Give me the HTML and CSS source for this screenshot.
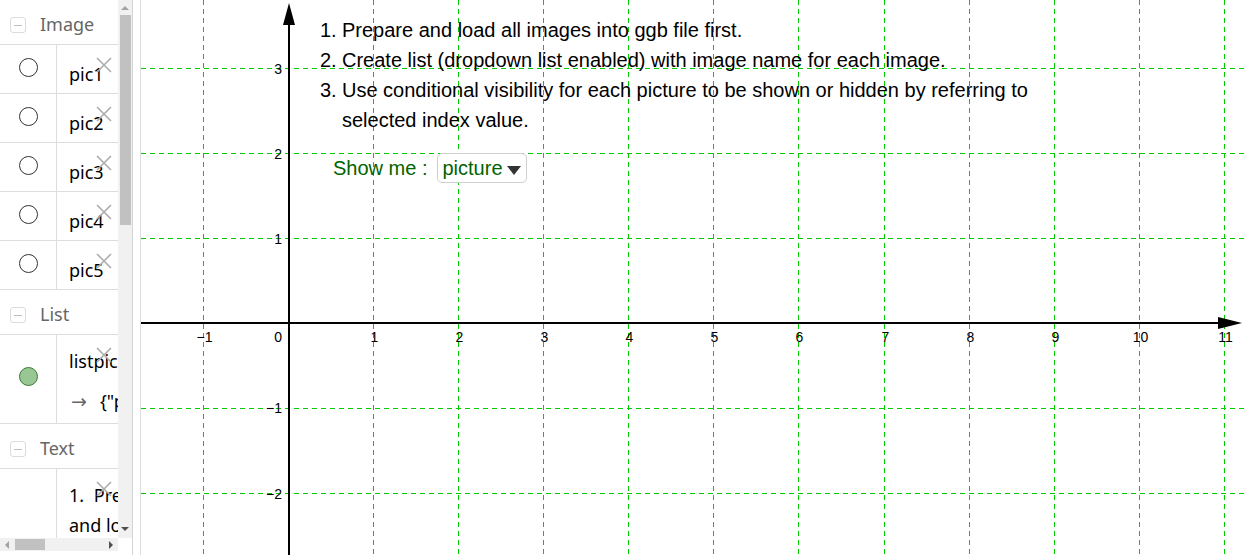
FILE: index.html
```html
<!DOCTYPE html>
<html>
<head>
<meta charset="utf-8">
<link rel="stylesheet" href="styles.css">
</head>
<body>
<div class="app">
  <aside class="algebra">
    <div class="av-list">
      <div class="av-header"><span class="collapse"><span class="minus"></span></span><span class="av-title">Image</span></div>
      <div class="av-item">
        <div class="marble-cell"><span class="marble"></span></div>
        <div class="av-content pic"><span>pic1</span><svg class="del" viewBox="0 0 16 16"><path d="M1 1L15 15M15 1L1 15"/></svg></div>
      </div>
      <div class="av-item">
        <div class="marble-cell"><span class="marble"></span></div>
        <div class="av-content pic"><span>pic2</span><svg class="del" viewBox="0 0 16 16"><path d="M1 1L15 15M15 1L1 15"/></svg></div>
      </div>
      <div class="av-item">
        <div class="marble-cell"><span class="marble"></span></div>
        <div class="av-content pic"><span>pic3</span><svg class="del" viewBox="0 0 16 16"><path d="M1 1L15 15M15 1L1 15"/></svg></div>
      </div>
      <div class="av-item">
        <div class="marble-cell"><span class="marble"></span></div>
        <div class="av-content pic"><span>pic4</span><svg class="del" viewBox="0 0 16 16"><path d="M1 1L15 15M15 1L1 15"/></svg></div>
      </div>
      <div class="av-item">
        <div class="marble-cell"><span class="marble"></span></div>
        <div class="av-content pic"><span>pic5</span><svg class="del" viewBox="0 0 16 16"><path d="M1 1L15 15M15 1L1 15"/></svg></div>
      </div>
      <div class="av-header"><span class="collapse"><span class="minus"></span></span><span class="av-title">List</span></div>
      <div class="av-item tall">
        <div class="marble-cell list-cell"><span class="marble filled"></span></div>
        <div class="av-content listc">
          <div class="line">listpic1 = {"picture", "pic1"}</div>
          <div class="line second"><span class="arrow">→</span>{"picture", "pic1"}</div>
          <svg class="del" viewBox="0 0 16 16"><path d="M1 1L15 15M15 1L1 15"/></svg>
        </div>
      </div>
      <div class="av-header"><span class="collapse"><span class="minus"></span></span><span class="av-title">Text</span></div>
      <div class="av-item textrow">
        <div class="marble-cell"></div>
        <div class="av-content textc">
          <div class="tline">1. <span class="tword">Prepare</span></div>
          <div class="tline">and load all images</div>
          <svg class="del" viewBox="0 0 16 16"><path d="M1 1L15 15M15 1L1 15"/></svg>
        </div>
      </div>
    </div>
    <div class="vscroll">
      <div class="arrow-box up"><span class="tri-up"></span></div>
      <div class="vthumb"></div>
      <div class="spacer"></div>
      <div class="arrow-box down"><span class="tri-down"></span></div>
    </div>
    <div class="hscroll">
      <div class="harrow left"><span class="tri-left"></span></div>
      <div class="hthumb"></div>
      <div class="spacer"></div>
      <div class="harrow right"><span class="tri-right"></span></div>
    </div>
    <div class="corner"></div>
  </aside>
  <div class="splitter"></div>
  <main class="graphics">
    <svg class="canvas" width="1105" height="555" viewBox="141 0 1105 555">
      <g class="grid">
        <line x1="203.5" y1="0" x2="203.5" y2="555"/>
        <line x1="373.5" y1="0" x2="373.5" y2="555"/>
        <line x1="458.5" y1="0" x2="458.5" y2="555"/>
        <line x1="543.5" y1="0" x2="543.5" y2="555"/>
        <line x1="628.5" y1="0" x2="628.5" y2="555"/>
        <line x1="713.5" y1="0" x2="713.5" y2="555"/>
        <line x1="798.5" y1="0" x2="798.5" y2="555"/>
        <line x1="884.5" y1="0" x2="884.5" y2="555"/>
        <line x1="969.5" y1="0" x2="969.5" y2="555"/>
        <line x1="1054.5" y1="0" x2="1054.5" y2="555"/>
        <line x1="1139.5" y1="0" x2="1139.5" y2="555"/>
        <line x1="1224.5" y1="0" x2="1224.5" y2="555"/>
        <line x1="141" y1="68.5" x2="1246" y2="68.5"/>
        <line x1="141" y1="153.5" x2="1246" y2="153.5"/>
        <line x1="141" y1="238.5" x2="1246" y2="238.5"/>
        <line x1="141" y1="408.5" x2="1246" y2="408.5"/>
        <line x1="141" y1="493.5" x2="1246" y2="493.5"/>
      </g>
      <g class="axes">
        <rect x="141" y="322" width="1078" height="2"/>
        <polygon points="1218,317 1242,323 1218,329"/>
        <rect x="288" y="24" width="2" height="531"/>
        <polygon points="283,25 289,3 295,25"/>
      </g>
      <g class="xlabels">
        <text x="204.5" y="342">−1</text>
        <text x="374.5" y="342">1</text>
        <text x="459.5" y="342">2</text>
        <text x="544.5" y="342">3</text>
        <text x="629.5" y="342">4</text>
        <text x="714.5" y="342">5</text>
        <text x="799.5" y="342">6</text>
        <text x="885.5" y="342">7</text>
        <text x="970.5" y="342">8</text>
        <text x="1055.5" y="342">9</text>
        <text x="1140.5" y="342">10</text>
        <text x="1225.5" y="342">11</text>
      </g>
      <g class="ylabels">
        <text x="282" y="342">0</text>
        <text x="282" y="74">3</text>
        <text x="282" y="159">2</text>
        <text x="282" y="244">1</text>
        <text x="282" y="413">−1</text>
        <text x="282" y="499">−2</text>
      </g>
    </svg>
    <div class="instructions">
      <div class="step"><span class="num">1.</span><span>Prepare and load all images into ggb file first.</span></div>
      <div class="step"><span class="num">2.</span><span>Create list (dropdown list enabled) with image name for each image.</span></div>
      <div class="step"><span class="num">3.</span><span>Use conditional visibility for each picture to be shown or hidden by referring to<br>selected index value.</span></div>
    </div>
    <div class="chooser">
      <span class="chooser-label">Show me :</span>
      <div class="dropdown"><span class="dd-value">picture</span><span class="dd-caret"></span></div>
    </div>
  </main>
</div>
</body>
</html>
```
FILE: styles.css
```css
* { box-sizing: border-box; }
html, body { margin: 0; padding: 0; background: #fff; }
body { width: 1246px; height: 555px; overflow: hidden; }

.app { display: flex; width: 1246px; height: 555px; }

/* ---------- Algebra view ---------- */
.algebra {
  width: 133px;
  height: 555px;
  border-right: 1px solid #d4d4d4;
  display: grid;
  grid-template-columns: 118px 14px;
  grid-template-rows: 538px 13px 4px;
  font-family: "Noto Sans", "Open Sans", sans-serif;
}
.av-list { grid-column: 1; grid-row: 1; overflow: hidden; background: #fff; }

.av-header {
  height: 45px;
  border-bottom: 1px solid #ddd;
  display: flex;
  align-items: flex-start;
  padding: 12px 0 0 10px;
  gap: 14px;
}
.collapse {
  width: 16px; height: 16px;
  margin-top: 5px;
  border: 1px solid #dcdcdc;
  border-radius: 3px;
  display: flex; align-items: center; justify-content: center;
}
.minus { width: 8px; height: 1px; background: #bdbdbd; }
.av-title { font-size: 18px; line-height: 24px; color: #666; }

.av-item { display: flex; height: 49px; border-bottom: 1px solid #ddd; }
.av-item.tall { height: 89px; }
.av-item.textrow { height: 80px; border-bottom: none; }

.marble-cell {
  width: 57px;
  flex: none;
  border-right: 1px solid #ddd;
  display: flex;
  justify-content: center;
  align-items: flex-start;
  padding-top: 13px;
}
.marble-cell.list-cell { padding-top: 32px; }
.marble {
  width: 19px; height: 19px;
  border: 1px solid #333;
  border-radius: 50%;
  background: #fff;
}
.marble.filled { background: #99c794; border-color: #3c7a35; }

.av-content {
  flex: 1;
  position: relative;
  padding-left: 12px;
  font-size: 18px;
  line-height: 24px;
  color: #000;
  white-space: nowrap;
}
.av-content.pic { padding-top: 17px; }
.av-content.listc { padding-top: 14px; }
.av-content.listc .second { margin-top: 16px; }
.arrow {
  display: inline-block;
  width: 31px;
  padding-left: 2px;
  color: #666;
  font-family: "DejaVu Sans", sans-serif;
  font-size: 19px;
}
.av-content.textc { padding-top: 11px; }
.tline { line-height: 30px; }
.tword { margin-left: 5px; }

.del {
  position: absolute;
  left: 39px; top: 12px;
  width: 16px; height: 16px;
}
.del path { stroke: #acacac; stroke-width: 1.6; fill: none; }

/* scrollbars */
.vscroll {
  grid-column: 2; grid-row: 1;
  background: #f1f1f1;
  display: flex; flex-direction: column;
}
.arrow-box { display: flex; justify-content: center; align-items: center; }
.arrow-box.up { height: 15px; }
.arrow-box.down { height: 18px; }
.tri-up { width: 0; height: 0; border-left: 4px solid transparent; border-right: 4px solid transparent; border-bottom: 4px solid #a3a3a3; }
.tri-down { width: 0; height: 0; border-left: 4px solid transparent; border-right: 4px solid transparent; border-top: 4px solid #505050; }
.vthumb { height: 210px; margin: 0 1px 0 2px; background: #c1c1c1; }
.spacer { flex: 1; }

.hscroll {
  grid-column: 1; grid-row: 2;
  background: #f1f1f1;
  display: flex; align-items: center;
}
.harrow { width: 13px; height: 13px; display: flex; align-items: center; justify-content: center; }
.harrow.right { width: 14px; }
.tri-left { width: 0; height: 0; border-top: 4px solid transparent; border-bottom: 4px solid transparent; border-right: 4px solid #a3a3a3; }
.tri-right { width: 0; height: 0; border-top: 4px solid transparent; border-bottom: 4px solid transparent; border-left: 4px solid #505050; }
.hthumb { width: 30px; height: 11px; margin-left: 2px; background: #c1c1c1; }
.corner { grid-column: 2; grid-row: 2; background: #fff; }

.splitter { width: 7px; flex: none; background: #fff; }

/* ---------- Graphics view ---------- */
.graphics {
  flex: 1;
  position: relative;
  height: 555px;
  border-left: 1px solid #dcdcdc;
  overflow: hidden;
  background: #fff;
}
.canvas { display: block; }
.grid line { stroke: #00cc00; stroke-width: 1; stroke-dasharray: 5 4; }
.axes rect, .axes polygon { fill: #000; }
.xlabels text { font-family: "Liberation Sans", Arial, sans-serif; font-size: 14px; text-anchor: middle; fill: #000; }
.ylabels text { font-family: "Liberation Sans", Arial, sans-serif; font-size: 14px; text-anchor: end; fill: #000; }

.instructions {
  position: absolute;
  left: 179px;
  top: 15px;
  font-family: "Liberation Sans", Arial, sans-serif;
  font-size: 20px;
  line-height: 30px;
  color: #000;
  white-space: nowrap;
}
.step { display: flex; }
.num { width: 22px; flex: none; }

.chooser {
  position: absolute;
  left: 192px;
  top: 153px;
  display: flex;
  align-items: center;
  gap: 10px;
  font-family: "Liberation Sans", Arial, sans-serif;
  font-size: 20px;
  line-height: 28px;
  color: #006400;
}
.dropdown {
  width: 90px;
  height: 30px;
  border: 1px solid #cfcfcf;
  border-radius: 5px;
  display: flex;
  align-items: center;
  padding-left: 4px;
  background: #fff;
}
.dd-value { line-height: 28px; }
.dd-caret {
  width: 0; height: 0;
  margin-left: 4px;
  margin-top: 4px;
  border-left: 7px solid transparent;
  border-right: 7px solid transparent;
  border-top: 9px solid #333;
}
```
